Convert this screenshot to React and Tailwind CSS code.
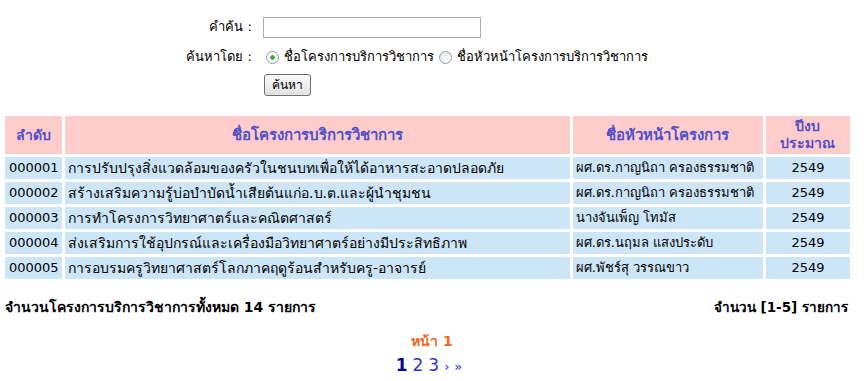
import React, { useState } from 'react';

const rows = [
  ['000001', 'การปรับปรุงสิ่งแวดล้อมของครัวในชนบทเพื่อให้ได้อาหารสะอาดปลอดภัย', 'ผศ.ดร.กาญนิถา ครองธรรมชาติ', '2549'],
  ['000002', 'สร้างเสริมความรู้บ่อบำบัดน้ำเสียต้นแก่อ.บ.ต.และผู้นำชุมชน', 'ผศ.ดร.กาญนิถา ครองธรรมชาติ', '2549'],
  ['000003', 'การทำโครงการวิทยาศาตร์และคณิตศาสตร์', 'นางจันเพ็ญ โทมัส', '2549'],
  ['000004', 'ส่งเสริมการใช้อุปกรณ์และเครื่องมือวิทยาศาตร์อย่างมีประสิทธิภาพ', 'ผศ.ดร.นฤมล แสงประดับ', '2549'],
  ['000005', 'การอบรมครูวิทยาศาสตร์โลกภาคฤดูร้อนสำหรับครู-อาจารย์', 'ผศ.พัชร์สุ วรรณขาว', '2549'],
];

const radioCls =
  "appearance-none w-[13px] h-[13px] m-0 rounded-full border border-[#8a98a6] bg-gradient-to-br from-[#e6e6e6] to-white checked:bg-[radial-gradient(circle,#35a835_0_2px,#ffffff_2.5px)]";

const App = () => {
  const [keyword, setKeyword] = useState('');
  const [searchBy, setSearchBy] = useState('project');

  return (
    <div className="w-[864px] h-[381px] bg-white text-[13px] text-black font-['DejaVu_Sans',sans-serif] overflow-hidden">
      {/* Search form */}
      <div className="pt-[16px] flex flex-col">
        <div className="flex items-center h-[22px]">
          <label className="w-[252px] text-right">คำค้น :</label>
          <input
            type="text"
            value={keyword}
            onChange={(e) => setKeyword(e.target.value)}
            className="ml-[11px] w-[218px] h-[21px] border border-[#a5acb2] px-1 outline-none"
          />
        </div>
        <div className="flex items-center h-[22px] mt-[8px]">
          <label className="w-[252px] text-right">ค้นหาโดย :</label>
          <label className="ml-[14px] flex items-center gap-[5px]">
            <input
              type="radio"
              name="by"
              checked={searchBy === 'project'}
              onChange={() => setSearchBy('project')}
              className={radioCls}
            />
            ชื่อโครงการบริการวิชาการ
          </label>
          <label className="ml-[5px] flex items-center gap-[5px]">
            <input
              type="radio"
              name="by"
              checked={searchBy === 'head'}
              onChange={() => setSearchBy('head')}
              className={radioCls}
            />
            ชื่อหัวหน้าโครงการบริการวิชาการ
          </label>
        </div>
        <div className="flex mt-[6px]">
          <button
            type="button"
            className="ml-[264px] w-[47px] h-[22px] text-[12px] rounded-[3px] border border-[#707070] bg-gradient-to-b from-[#fafafa] to-[#e2e2e2]"
          >
            ค้นหา
          </button>
        </div>
      </div>

      {/* Result table */}
      <table className="mt-[17px] ml-[2px] w-[851px] border-separate border-spacing-[3px] table-fixed">
        <colgroup>
          <col className="w-[57px]" />
          <col className="w-[504px]" />
          <col className="w-[190px]" />
          <col className="w-[84px]" />
        </colgroup>
        <thead>
          <tr className="bg-[#ffcccc] text-[#5050c8] h-[38px]">
            <th className="font-bold text-[14px]">ลำดับ</th>
            <th className="font-bold text-[15px]">ชื่อโครงการบริการวิชาการ</th>
            <th className="font-bold text-[15px]">ชื่อหัวหน้าโครงการ</th>
            <th className="font-bold text-[14px] leading-[17px]">ปีงบ<br />ประมาณ</th>
          </tr>
        </thead>
        <tbody>
          {rows.map((r) => (
            <tr key={r[0]} className="bg-[#cce6f8] h-[22px]">
              <td className="px-[4px] whitespace-nowrap leading-[18px]">{r[0]}</td>
              <td className="px-[3px] whitespace-nowrap overflow-hidden text-[14px] leading-[18px]">{r[1]}</td>
              <td className="px-[3px] whitespace-nowrap overflow-hidden leading-[18px]">{r[2]}</td>
              <td className="text-center leading-[18px]">{r[3]}</td>
            </tr>
          ))}
        </tbody>
      </table>

      {/* Summary */}
      <div className="mt-[15px] pl-[5px] pr-[16px] flex justify-between font-bold text-[14px]">
        <span>จำนวนโครงการบริการวิชาการทั้งหมด 14 รายการ</span>
        <span className="text-[13.5px]">จำนวน [1-5] รายการ</span>
      </div>

      {/* Pagination */}
      <div className="mt-[13px] flex flex-col items-center">
        <span className="text-[#f26522] font-bold text-[14px] leading-[20px]">หน้า 1</span>
        <div className="flex items-baseline gap-[5px] text-[17px] text-[#3333cc] leading-[22px] mt-[3px] ml-[-6px]">
          <span className="font-bold text-[#000099]">1</span>
          <a href="#">2</a>
          <a href="#">3</a>
          <a href="#" className="text-[13px]">›</a>
          <a href="#" className="text-[13px]">»</a>
        </div>
      </div>
    </div>
  );
};

export default App;
